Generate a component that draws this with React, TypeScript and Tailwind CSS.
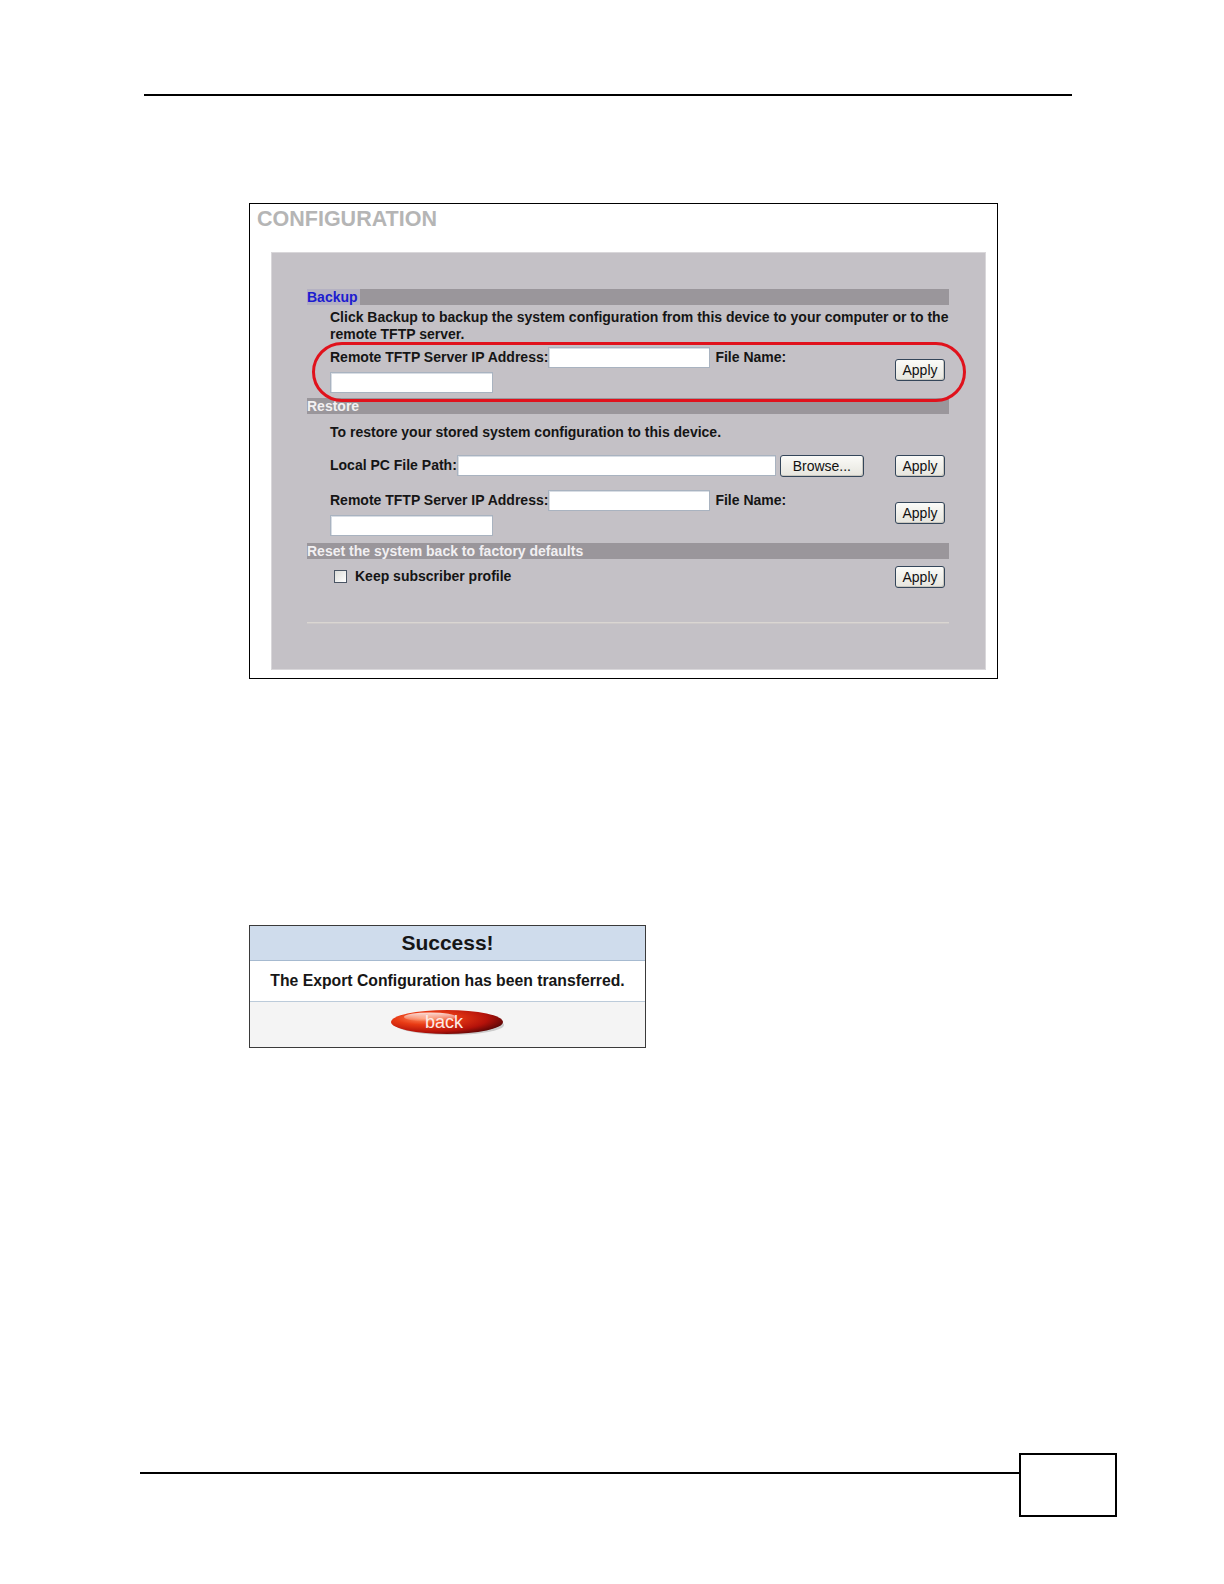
const Field = ({ w }: { w: string }) => (
  <div className={`${w} h-[21px] bg-white border border-[#a9b3c0] shadow-[inset_1px_1px_0_#d8dde4]`} />
);

const Btn = ({ label, w = "w-[50px]" }: { label: string; w?: string }) => (
  <button className={`${w} h-[22px] rounded-[3px] border border-[#34465a] bg-gradient-to-b from-[#fbfbf8] to-[#e6e5de] text-[14px] font-normal leading-none text-[#111] font-['Liberation_Sans',sans-serif] shadow-[inset_-1px_-1px_0_#c9c7bf]`}>
    {label}
  </button>
);

const SectionBar = ({ children }: { children: React.ReactNode }) => (
  <div className="h-[16px] bg-[#9a969b] flex items-center text-[14px] font-bold leading-none">{children}</div>
);

const BackButton = () => (
  <svg width="116" height="32" viewBox="0 0 116 32">
    <defs>
      <radialGradient id="backRed" cx="0.3" cy="0.35" r="0.75">
        <stop offset="0" stopColor="#ff8a5c" />
        <stop offset="0.35" stopColor="#e83a14" />
        <stop offset="0.75" stopColor="#b4120a" />
        <stop offset="1" stopColor="#5a0606" />
      </radialGradient>
      <linearGradient id="backShine" x1="0" y1="0" x2="0" y2="1">
        <stop offset="0" stopColor="#ffffff" stopOpacity="0.85" />
        <stop offset="1" stopColor="#ffffff" stopOpacity="0" />
      </linearGradient>
    </defs>
    <ellipse cx="60" cy="18" rx="54" ry="10" fill="#9a9a9a" opacity="0.45" />
    <ellipse cx="57" cy="15" rx="56" ry="12" fill="url(#backRed)" />
    <ellipse cx="40" cy="10" rx="26" ry="4.5" fill="url(#backShine)" />
    <text x="54" y="21" textAnchor="middle" fontFamily="Liberation Sans, sans-serif" fontSize="18" fill="#fcebe6">
      back
    </text>
  </svg>
);

export default function App() {
  return (
    <div className="w-[1224px] h-[1584px] overflow-hidden bg-white flex flex-col font-['Liberation_Sans',Arial,sans-serif] text-black">
      {/* top rule */}
      <div className="ml-[144px] mt-[94px] w-[928px] h-[1.5px] bg-black" />

      {/* configuration screenshot */}
      <div className="ml-[249px] mt-[107px] w-[749px] h-[476px] border border-black bg-white">
        <div className="pl-[7px] pt-[3px] h-[27px] text-[21.5px] leading-[24px] font-bold text-[#b5b5b5]">
          CONFIGURATION
        </div>
        <div className="ml-[21px] mt-[21px] w-[715px] h-[418px] border border-[#d9d7da] bg-[#c4c1c6] pl-[35px] pt-[36px]">
          <div className="w-[642px] text-[14px] font-bold text-[#151515]">
            {/* Backup */}
            <SectionBar>
              <span className="bg-[#b4b1c2] text-[#1c1cd0] pr-[2px] h-full flex items-center">Backup</span>
            </SectionBar>
            <p className="pl-[23px] pt-[4px] leading-[17px]">
              Click Backup to backup the system configuration from this device to your computer or to the remote TFTP server.
            </p>
            <div className="relative mt-[4px] pl-[23px] pr-[4px] flex items-center justify-between">
              <div className="flex flex-col gap-[4px]">
                <div className="flex items-center h-[21px]">
                  <span>Remote TFTP Server IP Address:</span>
                  <Field w="w-[162px]" />
                  <span className="ml-[5px] self-start leading-[17px] pt-[2px]">File Name:</span>
                </div>
                <Field w="w-[163px]" />
              </div>
              <Btn label="Apply" />
              <div className="absolute left-[5px] -right-[17px] -top-[5px] h-[60px] rounded-[30px] border-[3px] border-[#e0121c] pointer-events-none" />
            </div>

            {/* Restore */}
            <div className="mt-[5px]">
              <SectionBar>
                <span className="text-[#f2f0f2]">Restore</span>
              </SectionBar>
            </div>
            <p className="pl-[23px] mt-[10px] leading-[17px]">To restore your stored system configuration to this device.</p>
            <div className="mt-[14px] pl-[23px] pr-[4px] flex items-center justify-between">
              <div className="flex items-center">
                <span>Local PC File Path:</span>
                <Field w="w-[319px]" />
                <div className="ml-[4px]">
                  <Btn label="Browse..." w="w-[84px]" />
                </div>
              </div>
              <Btn label="Apply" />
            </div>
            <div className="mt-[13px] pl-[23px] pr-[4px] flex items-center justify-between">
              <div className="flex flex-col gap-[4px]">
                <div className="flex items-center h-[21px]">
                  <span>Remote TFTP Server IP Address:</span>
                  <Field w="w-[162px]" />
                  <span className="ml-[5px] self-start leading-[17px] pt-[2px]">File Name:</span>
                </div>
                <Field w="w-[163px]" />
              </div>
              <Btn label="Apply" />
            </div>

            {/* Reset */}
            <div className="mt-[7px]">
              <SectionBar>
                <span className="text-[#f2f0f2]">Reset the system back to factory defaults</span>
              </SectionBar>
            </div>
            <div className="mt-[7px] pl-[27px] pr-[4px] flex items-center justify-between">
              <div className="flex items-center gap-[8px]">
                <div className="w-[13px] h-[13px] border border-[#4a5564] bg-gradient-to-br from-[#dcdcd8] to-white" />
                <span>Keep subscriber profile</span>
              </div>
              <Btn label="Apply" />
            </div>
            <div className="mt-[34px] h-[2px] bg-[#dad6d2] border-b border-[#cdc9c9]" />
          </div>
        </div>
      </div>

      {/* success dialog */}
      <div className="ml-[249px] mt-[246px] w-[397px] h-[123px] border border-[#3a3a3a] flex flex-col">
        <div className="h-[35px] bg-[#cfdcec] border-b border-[#a6bad0] flex items-center justify-center text-[21px] font-bold text-[#161616]">
          Success!
        </div>
        <div className="h-[41px] bg-white border-b border-[#bccbda] flex items-center justify-center text-[15.75px] font-bold text-[#161616]">
          The Export Configuration has been transferred.
        </div>
        <div className="flex-1 bg-[#f4f4f4] flex items-start justify-center pt-[5px]">
          <BackButton />
        </div>
      </div>

      {/* footer */}
      <div className="mt-auto mb-[67px] flex items-end">
        <div className="ml-[140px] w-[879px] h-[2px] bg-black mb-[43px]" />
        <div className="w-[98px] h-[64px] border-2 border-black" />
      </div>
    </div>
  );
}
